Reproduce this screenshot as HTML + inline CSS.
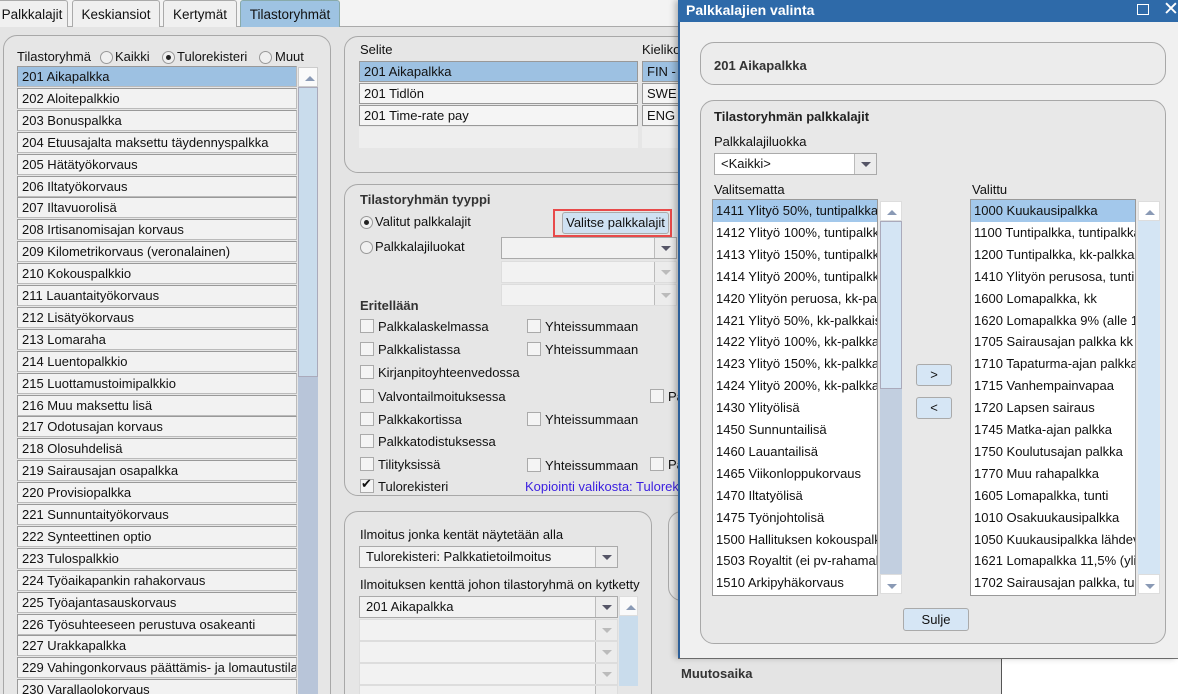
<!DOCTYPE html>
<html><head><meta charset="utf-8"><style>
*{box-sizing:border-box;margin:0;padding:0}
html{width:1178px;height:694px;overflow:hidden}
body{width:1178px;height:694px;overflow:hidden;background:#e4e4e4;font-family:"Liberation Sans",Arial,sans-serif;font-size:13px;color:#111;position:relative}
.a{position:absolute}
.tab{position:absolute;top:0;height:27px;border:1px solid #aaa;border-bottom:none;background:#f0f0f0;font-size:13.5px;line-height:27px;text-align:center;border-radius:3px 3px 0 0}
.panel{position:absolute;border:1px solid #a8a8a8;border-radius:14px;background:#e6e6e6}
.row{position:absolute;left:17px;width:280px;height:21px;border:1px solid #bbb;border-top-color:#999;border-left-color:#999;background:#f2f2f2;padding-left:4px;line-height:19px;white-space:nowrap;overflow:hidden}
.sel{background:#9dc1e2}
.cb{position:absolute;width:14px;height:14px;border:1px solid #aaa;background:#f4f4f4}
.lbl{position:absolute;white-space:nowrap}
.rad{position:absolute;width:13px;height:13px;border:1px solid #999;border-radius:50%;background:#f0f0f0}
.dot::after{content:"";position:absolute;left:3px;top:3px;width:5px;height:5px;border-radius:50%;background:#222}
.combo{position:absolute;height:22px;border:1px solid #aaa;background:#f2f2f2;padding-left:6px;line-height:20px}
.combo .btn{position:absolute;right:0;top:0;width:22px;height:20px;border-left:1px solid #bbb;background:#ececec}
.combo .btn::after{content:"";position:absolute;left:6px;top:8px;border-left:5px solid transparent;border-right:5px solid transparent;border-top:5px solid #556}
.dis .btn::after{border-top-color:#bbb}
.dl{position:absolute;height:22px;line-height:22px;padding-left:3px;white-space:nowrap;overflow:hidden}
.up::after{content:"";position:absolute;left:6px;top:8px;border-left:5px solid transparent;border-right:5px solid transparent;border-bottom:5px solid #8a9ab5}
.dn::after{content:"";position:absolute;left:6px;top:9px;border-left:5px solid transparent;border-right:5px solid transparent;border-top:5px solid #8a9ab5}
.b{font-weight:bold}
</style></head><body>
<div class="a" style="left:0;top:0;width:1178px;height:27px;background:#f3f3f3;border-bottom:1px solid #aaa"></div>
<div class="tab" style="left:-4px;width:72px">Palkkalajit</div>
<div class="tab" style="left:72px;width:88px">Keskiansiot</div>
<div class="tab" style="left:163px;width:74px">Kertymät</div>
<div class="tab" style="left:240px;width:100px;background:#9ec3e2;border-color:#8aa">Tilastoryhmät</div>

<div class="panel" style="left:3px;top:35px;width:328px;height:680px"></div>
<div class="lbl" style="left:17px;top:49px">Tilastoryhmä</div>
<div class="rad" style="left:100px;top:51px"></div><div class="lbl" style="left:115px;top:49px">Kaikki</div>
<div class="rad dot" style="left:162px;top:51px"></div><div class="lbl" style="left:177px;top:49px">Tulorekisteri</div>
<div class="rad" style="left:259px;top:51px"></div><div class="lbl" style="left:275px;top:49px">Muut</div>
<div class="a up" style="left:298px;top:67px;width:20px;height:20px;background:#fafafa;border:1px solid #ccc"></div>
<div class="a" style="left:298px;top:87px;width:20px;height:290px;background:#c9dcec;border:1px solid #aab"></div>
<div class="a" style="left:298px;top:377px;width:20px;height:320px;background:#b8c5d9"></div>
<div id="ll"></div>

<div class="panel" style="left:344px;top:36px;width:400px;height:137px"></div>
<div class="lbl" style="left:360px;top:42px">Selite</div>
<div class="lbl" style="left:642px;top:42px">Kieliko</div>
<div class="a" style="left:359px;top:61px;width:279px;height:21px;background:#9dc1e2;border:1px solid #999;padding-left:4px;line-height:19px">201 Aikapalkka</div>
<div class="a" style="left:359px;top:83px;width:279px;height:21px;background:#f5f5f5;border:1px solid #999;padding-left:4px;line-height:19px">201 Tidlön</div>
<div class="a" style="left:359px;top:105px;width:279px;height:21px;background:#f5f5f5;border:1px solid #999;padding-left:4px;line-height:19px">201 Time-rate pay</div>
<div class="a" style="left:359px;top:127px;width:279px;height:21px;background:#eeeeee"></div>
<div class="a" style="left:642px;top:61px;width:40px;height:21px;background:#9dc1e2;border:1px solid #999;padding-left:4px;line-height:19px">FIN -</div>
<div class="a" style="left:642px;top:83px;width:40px;height:21px;background:#f5f5f5;border:1px solid #999;padding-left:4px;line-height:19px">SWE</div>
<div class="a" style="left:642px;top:105px;width:40px;height:21px;background:#f5f5f5;border:1px solid #999;padding-left:4px;line-height:19px">ENG</div>
<div class="a" style="left:642px;top:127px;width:40px;height:21px;background:#eeeeee"></div>

<div class="panel" style="left:344px;top:184px;width:400px;height:312px"></div>
<div class="lbl b" style="left:360px;top:192px;color:#333">Tilastoryhmän tyyppi</div>
<div class="rad dot" style="left:360px;top:216px"></div><div class="lbl" style="left:375px;top:214px">Valitut palkkalajit</div>
<div class="rad" style="left:360px;top:241px"></div><div class="lbl" style="left:375px;top:239px">Palkkalajiluokat</div>
<div class="a" style="left:553px;top:209px;width:119px;height:28px;border:2px solid #e84a4a"></div>
<div class="a" style="left:562px;top:212px;width:107px;height:22px;border:1px solid #aaa;border-radius:3px;background:#cfe1f2;text-align:center;line-height:20px">Valitse palkkalajit</div>
<div class="combo" style="left:501px;top:237px;width:176px"><div class="btn"></div></div>
<div class="combo dis" style="left:501px;top:261px;width:176px;border-color:#ddd"><div class="btn"></div></div>
<div class="combo dis" style="left:501px;top:284px;width:176px;border-color:#ddd"><div class="btn"></div></div>
<div class="lbl b" style="left:360px;top:298px;color:#333">Eritellään</div>
<div id="cbs"></div>
<div class="lbl" style="left:525px;top:479px;color:#3a1ee0">Kopiointi valikosta: Tulorekisteri</div>

<div class="panel" style="left:344px;top:511px;width:308px;height:200px"></div>
<div class="panel" style="left:668px;top:511px;width:100px;height:90px"></div>
<div class="lbl" style="left:360px;top:527px">Ilmoitus jonka kentät näytetään alla</div>
<div class="combo" style="left:359px;top:546px;width:259px;background:#f2f2f2">Tulorekisteri: Palkkatietoilmoitus<div class="btn"></div></div>
<div class="lbl" style="left:360px;top:577px">Ilmoituksen kenttä johon tilastoryhmä on kytketty</div>
<div class="combo" style="left:359px;top:596px;width:259px">201 Aikapalkka<div class="btn"></div></div>
<div class="combo dis" style="left:359px;top:619px;width:259px;border-color:#ddd"><div class="btn"></div></div>
<div class="combo dis" style="left:359px;top:641px;width:259px;border-color:#ddd"><div class="btn"></div></div>
<div class="combo dis" style="left:359px;top:663px;width:259px;border-color:#ddd"><div class="btn"></div></div>
<div class="combo dis" style="left:359px;top:685px;width:259px;border-color:#ddd"><div class="btn"></div></div>
<div class="a up" style="left:619px;top:596px;width:19px;height:20px;background:#fafafa;border:1px solid #ddd"></div>
<div class="a" style="left:619px;top:616px;width:19px;height:70px;background:#c9dcec"></div>

<div class="a" style="left:678px;top:658px;width:500px;height:36px;background:#e4e4e4;border-top:1px solid #777"></div>
<div class="a" style="left:1001px;top:659px;width:177px;height:35px;background:#fff;border-left:1px solid #555"></div>
<div class="lbl b" style="left:681px;top:666px;color:#333">Muutosaika</div>

<div class="a" style="left:678px;top:0;width:500px;height:658px;background:#f0f0f0;border-left:2px solid #2c5f99;box-shadow:-3px 0 6px rgba(0,0,0,.25)"></div>
<div class="a" style="left:678px;top:0;width:500px;height:22px;background:#2e6aa9"></div>
<div class="lbl b" style="left:686px;top:2px;color:#fff;font-size:14px">Palkkalajien valinta</div>
<div class="a" style="left:1137px;top:4px;width:12px;height:11px;border:1.5px solid #fff"></div>
<div class="lbl" style="left:1163px;top:-2px;color:#fff;font-size:19px">✕</div>
<div class="panel" style="left:700px;top:42px;width:466px;height:43px;background:#ececec"></div>
<div class="lbl b" style="left:714px;top:58px;color:#333">201 Aikapalkka</div>
<div class="panel" style="left:700px;top:100px;width:466px;height:544px;background:#e8e8e8"></div>
<div class="lbl b" style="left:714px;top:109px;color:#222">Tilastoryhmän palkkalajit</div>
<div class="lbl" style="left:714px;top:134px">Palkkalajiluokka</div>
<div class="combo" style="left:714px;top:153px;width:163px;background:#fff">&lt;Kaikki&gt;<div class="btn"></div></div>
<div class="lbl" style="left:714px;top:182px">Valitsematta</div>
<div class="lbl" style="left:972px;top:182px">Valittu</div>
<div class="a" style="left:712px;top:199px;width:166px;height:397px;background:#fff;border:1px solid #999"></div>
<div class="a" style="left:970px;top:199px;width:166px;height:397px;background:#fff;border:1px solid #999"></div>
<div class="a up" style="left:880px;top:201px;width:22px;height:20px;background:#fff;border:1px solid #ddd"></div>
<div class="a" style="left:880px;top:221px;width:22px;height:168px;background:#d4e5f4;border:1px solid #aab"></div>
<div class="a" style="left:880px;top:389px;width:22px;height:185px;background:#c2cfe0"></div>
<div class="a dn" style="left:880px;top:574px;width:22px;height:20px;background:#fff;border:1px solid #ddd"></div>
<div class="a up" style="left:1138px;top:201px;width:22px;height:20px;background:#fff;border:1px solid #ddd"></div>
<div class="a" style="left:1138px;top:221px;width:22px;height:353px;background:#d4e5f4"></div>
<div class="a dn" style="left:1138px;top:574px;width:22px;height:20px;background:#fff;border:1px solid #ddd"></div>
<div id="dl"></div>
<div class="a" style="left:916px;top:364px;width:36px;height:22px;border:1px solid #aaa;border-radius:3px;background:#d6e6f5;text-align:center;line-height:20px">&gt;</div>
<div class="a" style="left:916px;top:397px;width:36px;height:22px;border:1px solid #aaa;border-radius:3px;background:#d6e6f5;text-align:center;line-height:20px">&lt;</div>
<div class="a" style="left:903px;top:608px;width:66px;height:23px;border:1px solid #aaa;border-radius:3px;background:#d6e6f5;text-align:center;line-height:21px">Sulje</div>

<script>
var L=["201 Aikapalkka","202 Aloitepalkkio","203 Bonuspalkka","204 Etuusajalta maksettu täydennyspalkka","205 Hätätyökorvaus","206 Iltatyökorvaus","207 Iltavuorolisä","208 Irtisanomisajan korvaus","209 Kilometrikorvaus (veronalainen)","210 Kokouspalkkio","211 Lauantaityökorvaus","212 Lisätyökorvaus","213 Lomaraha","214 Luentopalkkio","215 Luottamustoimipalkkio","216 Muu maksettu lisä","217 Odotusajan korvaus","218 Olosuhdelisä","219 Sairausajan osapalkka","220 Provisiopalkka","221 Sunnuntaityökorvaus","222 Synteettinen optio","223 Tulospalkkio","224 Työaikapankin rahakorvaus","225 Työajantasauskorvaus","226 Työsuhteeseen perustuva osakeanti","227 Urakkapalkka","229 Vahingonkorvaus päättämis- ja lomautustilanteissa","230 Varallaolokorvaus"];
var h="";L.forEach(function(t,i){h+='<div class="row'+(i==0?' sel':'')+'" style="top:'+(66+i*21.9)+'px">'+t+'</div>'});
document.getElementById("ll").outerHTML=h;
var C=[[0,"Palkkalaskelmassa",327,1],[0,"Palkkalistassa",350,1],[0,"Kirjanpitoyhteenvedossa",373,0],[0,"Valvontailmoituksessa",397,2],[0,"Palkkakortissa",420,1],[0,"Palkkatodistuksessa",442,0],[0,"Tilityksissä",465,3],[1,"Tulorekisteri",487,0]];
h="";C.forEach(function(c){h+='<div class="cb" style="left:360px;top:'+(c[2]-8)+'px"></div><div class="lbl" style="left:378px;top:'+(c[2]-8)+'px">'+c[1]+'</div>';
if(c[0])h+='<div class="lbl" style="left:361px;top:'+(c[2]-11)+'px;font-size:13px">✔</div>';
if(c[3]==1||c[3]==3){var y=c[2]-8+(c[3]==3?1:0);h+='<div class="cb" style="left:527px;top:'+y+'px"></div><div class="lbl" style="left:545px;top:'+y+'px">Yhteissummaan</div>';}
if(c[3]==2||c[3]==3){h+='<div class="cb" style="left:650px;top:'+(c[2]-8)+'px"></div><div class="lbl" style="left:668px;top:'+(c[2]-8)+'px">Pa</div>';}
});
document.getElementById("cbs").outerHTML=h;
var A=["1411 Ylityö 50%, tuntipalkkai","1412 Ylityö 100%, tuntipalkk","1413 Ylityö 150%, tuntipalkk","1414 Ylityö 200%, tuntipalkk","1420 Ylityön peruosa, kk-pal","1421 Ylityö 50%, kk-palkkais","1422 Ylityö 100%, kk-palkka","1423 Ylityö 150%, kk-palkka","1424 Ylityö 200%, kk-palkka","1430 Ylityölisä","1450 Sunnuntailisä","1460 Lauantailisä","1465 Viikonloppukorvaus","1470 Iltatyölisä","1475 Työnjohtolisä","1500 Hallituksen kokouspalk","1503 Royaltit (ei pv-rahamak","1510 Arkipyhäkorvaus"];
var B=["1000 Kuukausipalkka","1100 Tuntipalkka, tuntipalkka","1200 Tuntipalkka, kk-palkkai","1410 Ylityön perusosa, tuntip","1600 Lomapalkka, kk","1620 Lomapalkka 9% (alle 1","1705 Sairausajan palkka kk","1710 Tapaturma-ajan palkka","1715 Vanhempainvapaa","1720 Lapsen sairaus","1745 Matka-ajan palkka","1750 Koulutusajan palkka","1770 Muu rahapalkka","1605 Lomapalkka, tunti","1010 Osakuukausipalkka","1050 Kuukausipalkka lähdev","1621 Lomapalkka 11,5% (yli","1702 Sairausajan palkka, tun"];
h="";A.forEach(function(t,i){h+='<div class="dl" style="left:713px;width:164px;top:'+(200+i*21.9)+'px;'+(i==0?'background:#a3c8eb':'')+'">'+t+'</div>'});
B.forEach(function(t,i){h+='<div class="dl" style="left:971px;width:164px;top:'+(200+i*21.9)+'px;'+(i==0?'background:#a3c8eb':'')+'">'+t+'</div>'});
document.getElementById("dl").outerHTML=h;
</script>
</body></html>
